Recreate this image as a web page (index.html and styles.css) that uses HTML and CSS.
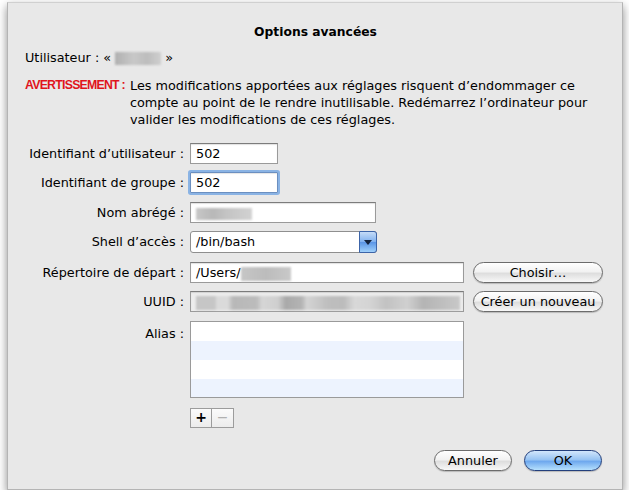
FILE: index.html
```html
<!DOCTYPE html>
<html lang="fr">
  <head>
    <meta charset="UTF-8" />
    <title>Options avancées</title>
    <link rel="stylesheet" href="styles.css">
  </head>
  <body>
    <div class="sheet">
      <h1 class="title">Options avancées</h1>
      <p class="user">Utilisateur : « <span class="blur blur-user"></span> »</p>
      <div class="warning">
        <span class="warn-label">AVERTISSEMENT :</span>
        <p class="warn-text">Les modifications apportées aux réglages risquent d’endommager ce compte au point de le rendre inutilisable. Redémarrez l’ordinateur pour valider les modifications de ces réglages.</p>
      </div>

      <div class="form">
        <label class="lbl">Identifiant d’utilisateur :</label>
        <div class="field short">502</div>

        <label class="lbl">Identifiant de groupe :</label>
        <div class="field short focused">502</div>

        <label class="lbl">Nom abrégé :</label>
        <div class="field medium"><span class="blur blur-name"></span></div>

        <label class="lbl">Shell d’accès :</label>
        <div class="popup">
          <span class="popup-value">/bin/bash</span>
          <span class="popup-arrow"></span>
        </div>

        <label class="lbl">Répertoire de départ :</label>
        <div class="with-btn">
          <div class="field long">/Users/<span class="blur blur-home"></span></div>
          <button class="aqua">Choisir…</button>
        </div>

        <label class="lbl">UUID :</label>
        <div class="with-btn">
          <div class="field long disabled"><span class="blur blur-uuid"></span></div>
          <button class="aqua">Créer un nouveau</button>
        </div>

        <label class="lbl lbl-top">Alias :</label>
        <div class="alias">
          <div class="alias-list">
            <div class="alias-row"></div>
            <div class="alias-row"></div>
            <div class="alias-row"></div>
            <div class="alias-row"></div>
          </div>
          <div class="plusminus">
            <span class="pm">+</span><span class="pm off">−</span>
          </div>
        </div>
      </div>

      <div class="actions">
        <button class="aqua">Annuler</button>
        <button class="aqua default">OK</button>
      </div>
    </div>
  </body>
</html>
```

FILE: styles.css
```css
body {
  margin: 0;
  background: #ffffff;
  font-family: "DejaVu Sans", "Noto Sans", sans-serif;
  font-size: 12.8px;
  color: #000;
}

.sheet {
  box-sizing: border-box;
  width: 616px;
  height: 488px;
  margin: 2px 0 0 7px;
  padding: 21px 16px 0 17px;
  background: #e8e8e8;
  border: 1px solid #b4b4b4;
  border-top-color: #d0d0d0;
  box-shadow: 0 4px 9px rgba(0, 0, 0, 0.45);
}

.title {
  margin: 0;
  font-size: 12.3px;
  line-height: 17px;
  font-weight: bold;
  text-align: center;
}

.user {
  margin: 8px 0 0 0;
  line-height: 17px;
}

.blur {
  display: inline-block;
  vertical-align: middle;
  filter: blur(1px);
}
.blur-user {
  width: 46px;
  height: 13px;
  background: linear-gradient(90deg, #b0b0b0, #c8c8c8 40%, #bdbdbd 70%, #cfcfcf);
}
.blur-name {
  width: 56px;
  height: 12px;
  background: linear-gradient(90deg, #c7c7c7, #b8b8b8 30%, #c4c4c4 55%, #d2d2d2);
}
.blur-home {
  width: 50px;
  height: 14px;
  margin-left: 1px;
  background: linear-gradient(90deg, #c6c6c6, #bcbcbc 50%, #c9c9c9);
}
.blur-uuid {
  width: 264px;
  height: 14px;
  background: linear-gradient(90deg,
    #c6c6c6 0%, #c6c6c6 7%, #dadada 8%, #dadada 12%, #b8b8b8 14%, #bcbcbc 23%,
    #d6d6d6 25%, #cfcfcf 31%, #a9a9a9 34%, #b4b4b4 40%, #d4d4d4 42%, #bebebe 50%,
    #bcbcbc 56%, #d8d8d8 60%, #d4d4d4 66%, #c2c2c2 72%, #d0d0d0 80%, #b4b4b4 86%, #c8c8c8 100%);
}

.warning {
  display: flex;
  margin-top: 11px;
  line-height: 17px;
}
.warn-label {
  width: 105px;
  flex: none;
  white-space: nowrap;
  font-family: "Liberation Sans", Arial, sans-serif;
  font-size: 12.3px;
  letter-spacing: -0.75px;
  color: #e0141c;
  font-weight: bold;
}
.warn-text {
  margin: 0;
  width: 472px;
}

.form {
  display: grid;
  grid-template-columns: 159px 1fr;
  grid-template-rows: 29px 30px 29px 31px 29px 30px auto;
  column-gap: 6px;
  margin-top: 15px;
  align-items: start;
}

.lbl {
  text-align: right;
  line-height: 21px;
  white-space: nowrap;
}
.lbl-top {
  padding-top: 2px;
}

.field {
  box-sizing: border-box;
  height: 21px;
  padding: 0 5px;
  line-height: 19px;
  background: #fff;
  border: 1px solid #9a9a9a;
  border-top-color: #7c7c7c;
  box-shadow: inset 0 1px 1px rgba(0, 0, 0, 0.12);
  white-space: nowrap;
}
.short {
  width: 88px;
}
.medium {
  width: 186px;
}
.long {
  width: 274px;
}
.focused {
  border-color: #6b8fc0;
  box-shadow: 0 0 0 2px #8ab3e4, inset 0 1px 1px rgba(0, 0, 0, 0.1);
  border-radius: 1px;
}
.disabled {
  background: #ededed;
  padding-left: 5px;
}

.popup {
  box-sizing: border-box;
  display: flex;
  width: 187px;
  height: 22px;
  background: #fff;
  border: 1px solid #8f8f8f;
  border-radius: 3px;
}
.popup-value {
  flex: 1;
  padding-left: 5px;
  line-height: 20px;
}
.popup-arrow {
  position: relative;
  width: 16px;
  margin: -1px -1px -1px 0;
  border: 1px solid #3c64a8;
  border-radius: 0 3px 3px 0;
  background: linear-gradient(#c5dcf8, #7fb0ef 50%, #5a95e6 51%, #9fd0fb);
}
.popup-arrow::after {
  content: "";
  position: absolute;
  left: 4px;
  top: 8px;
  border-left: 4px solid transparent;
  border-right: 4px solid transparent;
  border-top: 5px solid #14243e;
}

.with-btn {
  display: flex;
  align-items: center;
  gap: 9px;
}

.aqua {
  box-sizing: border-box;
  height: 21px;
  width: 130px;
  padding: 0;
  font-family: inherit;
  font-size: 12.8px;
  color: #000;
  border: 1px solid #6c6c6c;
  border-radius: 11px;
  background: linear-gradient(#ffffff, #f2f2f2 45%, #dedede 55%, #f8f8f8);
  box-shadow: 0 1px 1px rgba(0, 0, 0, 0.2);
}

.alias-list {
  box-sizing: border-box;
  width: 274px;
  height: 77px;
  overflow: hidden;
  border: 1px solid #9a9a9a;
  background: #fff;
}
.alias-row {
  height: 19px;
}
.alias-row:nth-child(2n) {
  background: #edf3fe;
}

.plusminus {
  display: flex;
  margin-top: 10px;
}
.pm {
  box-sizing: border-box;
  width: 22px;
  height: 20px;
  line-height: 17px;
  text-align: center;
  font-size: 14px;
  font-weight: bold;
  background: linear-gradient(#fbfbfb, #ececec);
  border: 1px solid #9c9c9c;
}
.pm.off {
  color: #b0b0b0;
  font-weight: normal;
  border-left: none;
}

.actions {
  display: flex;
  justify-content: flex-end;
  gap: 12px;
  margin: 22px 4px 0 0;
}
.actions .aqua {
  width: 78px;
}
.aqua.default {
  border-color: #233f7c;
  background: linear-gradient(#d2e6fb, #98c4f3 45%, #6fa9ee 55%, #b6e0fd);
}
```
